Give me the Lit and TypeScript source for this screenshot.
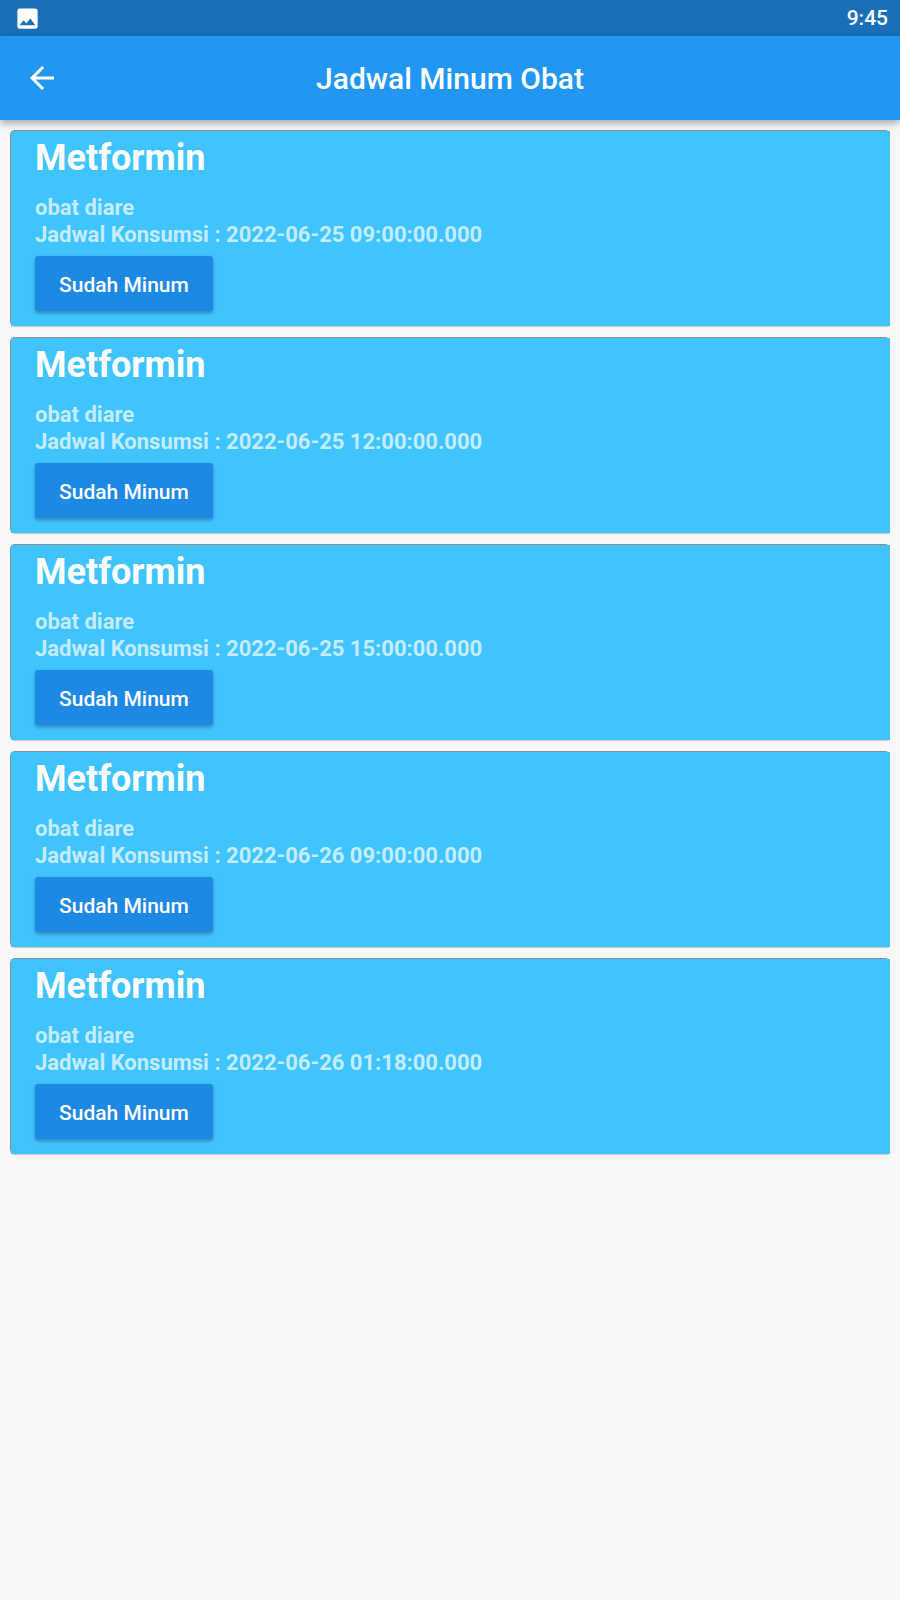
import { LitElement, html, css } from "lit";
import { customElement, property, state } from "lit/decorators.js";

interface Dose {
  name: string;
  note: string;
  time: string;
}

@customElement("dose-card")
class DoseCard extends LitElement {
  @property({ attribute: false }) dose!: Dose;

  static styles = css`
    :host {
      display: block;
    }
    .card {
      border-top: 1px solid #8e8e8e;
      border-left: 1px solid #8e8e8e;
      border-radius: 5px 5px 3px 5px;
      box-shadow: 0 1px 1px rgba(0, 0, 0, 0.2);
    }
    .body {
      background: #40c4ff;
      padding: 6px 24px 15px;
    }
    .name {
      margin: 0 0 14px;
      font-size: 36px;
      line-height: 43px;
      font-weight: 700;
      color: #fff;
    }
    .info {
      margin: 0;
      font-size: 22px;
      line-height: 27px;
      font-weight: 700;
      color: rgba(255, 255, 255, 0.7);
    }
    .done {
      display: block;
      box-sizing: border-box;
      height: 55px;
      margin: 8px 0 0;
      padding: 3px 24px 0;
      border: 0;
      border-radius: 3px;
      background: #1e88e5;
      color: #fff;
      font: 500 21px/52px Roboto, sans-serif;
      box-shadow: 0 3px 3px rgba(0, 0, 0, 0.16), 0 1px 4px rgba(0, 0, 0, 0.16);
      cursor: pointer;
    }
  `;

  render() {
    return html`
      <article class="card">
        <div class="body">
          <h2 class="name">${this.dose.name}</h2>
          <p class="info">${this.dose.note}</p>
          <p class="info">Jadwal Konsumsi : ${this.dose.time}</p>
          <button class="done" type="button">Sudah Minum</button>
        </div>
      </article>
    `;
  }
}

@customElement("app-root")
class AppRoot extends LitElement {
  @state() private doses: Dose[] = [
    "2022-06-25 09:00:00.000",
    "2022-06-25 12:00:00.000",
    "2022-06-25 15:00:00.000",
    "2022-06-26 09:00:00.000",
    "2022-06-26 01:18:00.000",
  ].map((time) => ({ name: "Metformin", note: "obat diare", time }));

  static styles = css`
    :host {
      display: flex;
      flex-direction: column;
      min-height: 100vh;
      background: #f9f8f7;
      font-family: Roboto, sans-serif;
    }
    .status {
      display: flex;
      align-items: center;
      justify-content: space-between;
      height: 36px;
      padding: 0 12px 0 14px;
      background: #1a70b8;
      color: #fff;
      font-size: 21px;
      line-height: 38px;
      font-weight: 500;
    }
    .bar {
      display: grid;
      grid-template-columns: 84px 1fr 84px;
      align-items: center;
      height: 84px;
      background: #2196f3;
      box-shadow: 0 3px 8px rgba(0, 0, 0, 0.35);
    }
    .back {
      display: grid;
      place-items: center;
      height: 84px;
      padding: 0;
      border: 0;
      background: none;
      cursor: pointer;
    }
    svg {
      display: block;
      fill: #fff;
    }
    .title {
      margin: 0;
      padding-top: 2px;
      text-align: center;
      font-size: 30px;
      line-height: 36px;
      font-weight: 500;
      color: #fff;
    }
    .list {
      display: flex;
      flex-direction: column;
      gap: 11px;
      padding: 10px;
    }
  `;

  render() {
    return html`
      <div class="status">
        <svg width="27" height="27" viewBox="0 0 24 24" aria-hidden="true">
          <path
            d="M21 19V5c0-1.100-.9-2-2-2H5c-1.100 0-2 .9-2 2v14c0 1.100.9 2 2 2h14c1.100 0 2-.9 2-2zM8.500 13.500l2.500 3.010L14.500 12l4.500 6H5l3.500-4.500z"
          />
        </svg>
        <time>9:45</time>
      </div>
      <header class="bar">
        <button class="back" type="button" aria-label="Kembali">
          <svg width="36" height="36" viewBox="0 0 24 24" aria-hidden="true">
            <path d="M20 11H7.830l5.590-5.590L12 4l-8 8 8 8 1.410-1.410L7.830 13H20v-2z" />
          </svg>
        </button>
        <h1 class="title">Jadwal Minum Obat</h1>
      </header>
      <main class="list">
        ${this.doses.map((dose) => html`<dose-card .dose=${dose}></dose-card>`)}
      </main>
    `;
  }
}
